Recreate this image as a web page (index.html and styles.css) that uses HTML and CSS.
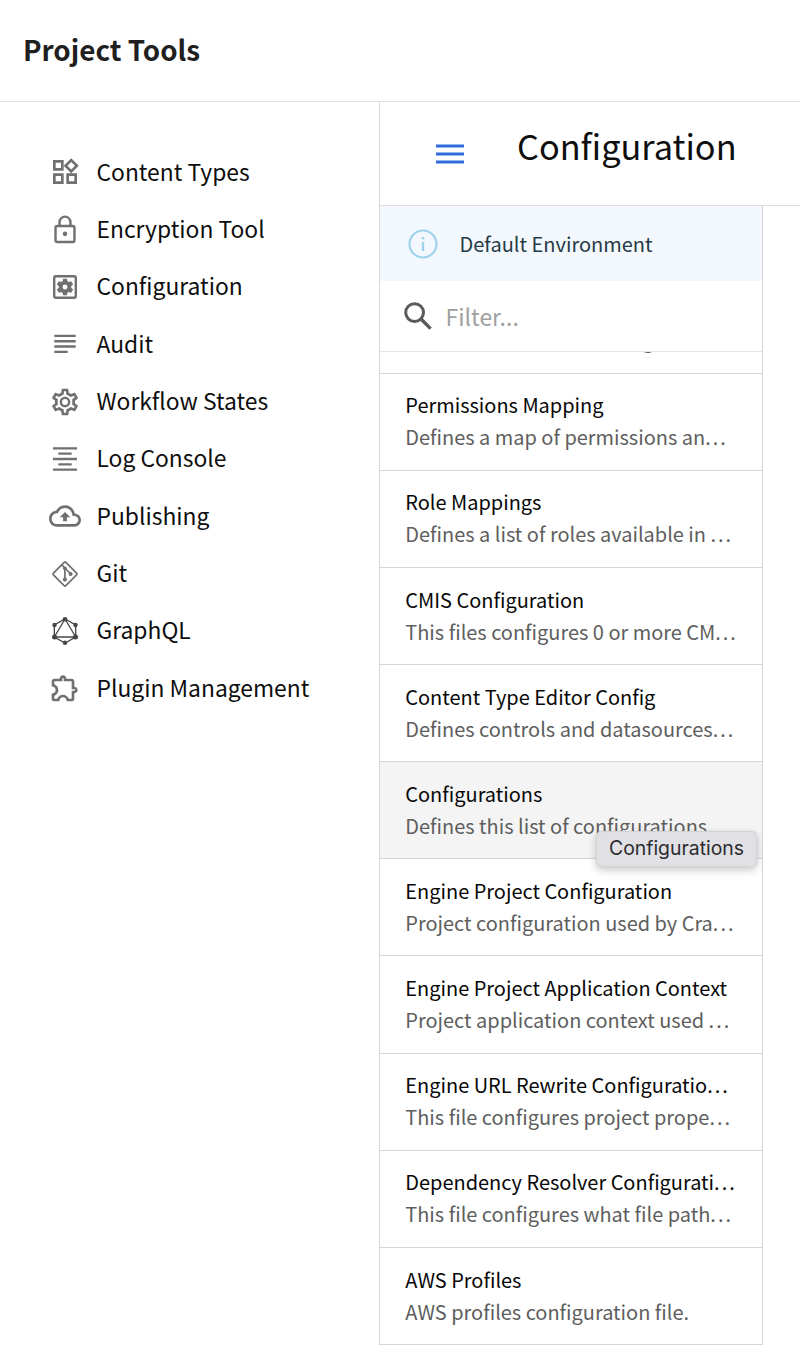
FILE: index.html
```html
<!DOCTYPE html>
<html lang="en">
<head>
<meta charset="utf-8">
<title>Project Tools</title>
<link rel="stylesheet" href="styles.css">
</head>
<body>
<div class="app">
  <header class="app-header"><h1 class="app-title">Project Tools</h1></header>
  <div class="app-body">
    <nav class="sidebar">
      <a class="nav-item"><svg class="icon" viewBox="0 0 24 24"><path d="M16.66 4.52l2.83 2.83-2.83 2.83-2.83-2.83 2.83-2.83M9 5v4H5V5h4m10 10v4h-4v-4h4M9 15v4H5v-4h4m7.66-13.31L11 7.34 16.66 13l5.66-5.66-5.66-5.65zM11 3H3v8h8V3zm10 10h-8v8h8v-8zm-10 0H3v8h8v-8z"/></svg><span class="nav-label">Content Types</span></a>
      <a class="nav-item"><svg class="icon" viewBox="0 0 24 24"><g fill="none" stroke="currentColor" stroke-width="1.8"><rect x="4.9" y="9" width="14.2" height="12" rx="1.3"/><path d="M7.9 9V6.100a4.1 4.1 0 0 1 8.2 0V9"/></g><circle cx="12" cy="14.900" r="1.700"/></svg><span class="nav-label">Encryption Tool</span></a>
      <a class="nav-item"><svg class="icon" viewBox="0 0 24 24"><rect x="3.9" y="3.9" width="16.2" height="16.2" rx="1.3" fill="none" stroke="currentColor" stroke-width="1.8"/><path transform="translate(12 12) scale(.62) translate(-12 -12)" fill-rule="evenodd" d="M19.43 12.98c.04-.32.07-.64.07-.98 0-.34-.03-.66-.07-.98l2.11-1.65c.19-.15.24-.42.12-.64l-2-3.46c-.09-.16-.26-.25-.44-.25-.06 0-.12.01-.17.03l-2.49 1c-.52-.4-1.08-.73-1.69-.98l-.38-2.65C14.46 2.18 14.25 2 14 2h-4c-.25 0-.46.18-.49.42l-.38 2.65c-.61.25-1.17.59-1.69.98l-2.49-1c-.06-.02-.12-.03-.18-.03-.17 0-.34.09-.43.25l-2 3.46c-.13.22-.07.49.12.64l2.11 1.65c-.04.32-.07.65-.07.98 0 .33.03.66.07.98l-2.11 1.65c-.19.15-.24.42-.12.64l2 3.46c.09.16.26.25.44.25.06 0 .12-.01.17-.03l2.49-1c.52.4 1.08.73 1.69.98l.38 2.65c.03.24.24.42.49.42h4c.25 0 .46-.18.49-.42l.38-2.65c.61-.25 1.17-.59 1.69-.98l2.49 1c.06.02.12.03.18.03.17 0 .34-.09.43-.25l2-3.46c.12-.22.07-.49-.12-.64l-2.11-1.65zM12 15a3 3 0 1 1 0-6 3 3 0 0 1 0 6z"/></svg><span class="nav-label">Configuration</span></a>
      <a class="nav-item"><svg class="icon" viewBox="0 0 24 24"><path d="M14 17H4v1.8h10V17zm6-8H4v1.8h16V9zM4 14.8h16V13H4v1.8zM4 5v1.8h16V5H4z"/></svg><span class="nav-label">Audit</span></a>
      <a class="nav-item"><svg class="icon" viewBox="0 0 24 24"><path fill-rule="evenodd" d="M19.43 12.98c.04-.32.07-.64.07-.98 0-.34-.03-.66-.07-.98l2.11-1.65c.19-.15.24-.42.12-.64l-2-3.46c-.09-.16-.26-.25-.44-.25-.06 0-.12.01-.17.03l-2.49 1c-.52-.4-1.08-.73-1.69-.98l-.38-2.65C14.46 2.18 14.25 2 14 2h-4c-.25 0-.46.18-.49.42l-.38 2.65c-.61.25-1.17.59-1.69.98l-2.49-1c-.06-.02-.12-.03-.18-.03-.17 0-.34.09-.43.25l-2 3.46c-.13.22-.07.49.12.64l2.11 1.65c-.04.32-.07.65-.07.98 0 .33.03.66.07.98l-2.11 1.65c-.19.15-.24.42-.12.64l2 3.46c.09.16.26.25.44.25.06 0 .12-.01.17-.03l2.49-1c.52.4 1.08.73 1.69.98l.38 2.65c.03.24.24.42.49.42h4c.25 0 .46-.18.49-.42l.38-2.65c.61-.25 1.17-.59 1.69-.98l2.49 1c.06.02.12.03.18.03.17 0 .34-.09.43-.25l2-3.46c.12-.22.07-.49-.12-.64l-2.11-1.65zm-1.98-1.71c.04.31.05.52.05.73 0 .21-.02.43-.05.73l-.14 1.13.89.7 1.08.84-.7 1.21-1.27-.51-1.04-.42-.9.68c-.43.32-.84.56-1.25.73l-1.06.43-.16 1.13-.2 1.35h-1.4l-.19-1.35-.16-1.13-1.06-.43c-.43-.18-.83-.41-1.23-.71l-.91-.7-1.06.43-1.27.51-.7-1.21 1.08-.84.89-.7-.14-1.13c-.03-.31-.05-.54-.05-.74s.02-.43.05-.73l.14-1.13-.89-.7-1.08-.84.7-1.21 1.27.51 1.04.42.9-.68c.43-.32.84-.56 1.25-.73l1.06-.43.16-1.13.2-1.35h1.39l.19 1.35.16 1.13 1.06.43c.43.18.83.41 1.23.71l.91.7 1.06-.43 1.27-.51.7 1.21-1.07.85-.89.7.14 1.13zM12 8c-2.21 0-4 1.79-4 4s1.79 4 4 4 4-1.79 4-4-1.79-4-4-4zm0 6.2a2.2 2.2 0 1 1 0-4.400 2.200 2.200 0 0 1 0 4.400z"/></svg><span class="nav-label">Workflow States</span></a>
      <a class="nav-item"><svg class="icon" viewBox="0 0 24 24"><path d="M7 15.100v1.700h10v-1.700H7zm-4 5.800h18v-1.800H3v1.800zm0-8h18v-1.800H3v1.800zm4-5.700v1.700h10V7.200H7zM3 3.100v1.800h18V3.100H3z"/></svg><span class="nav-label">Log Console</span></a>
      <a class="nav-item"><svg class="icon" viewBox="0 0 24 24"><path d="M19.35 10.04C18.67 6.59 15.64 4 12 4 9.110 4 6.600 5.640 5.350 8.040 2.340 8.360 0 10.910 0 14c0 3.310 2.690 6 6 6h13c2.760 0 5-2.240 5-5 0-2.640-2.050-4.780-4.650-4.960zM19 18H6c-2.210 0-4-1.790-4-4 0-2.050 1.530-3.760 3.560-3.970l1.070-.11.500-.95C8.080 7.140 9.940 6 12 6c2.620 0 4.880 1.860 5.390 4.430l.3 1.500 1.530.11c1.560.1 2.780 1.410 2.780 2.960 0 1.650-1.350 3-3 3zM8 13h2.550v3h2.900v-3H16l-4-4z"/></svg><span class="nav-label">Publishing</span></a>
      <a class="nav-item"><svg class="icon" viewBox="0 0 32 32"><g fill="none" stroke="currentColor" stroke-width="1.700"><rect x="7.200" y="7.200" width="17.600" height="17.600" rx="1.200" transform="rotate(45 16 16)"/><path d="M12.600 6.700L15.900 10v11.500M15.900 10l6 6"/></g><circle cx="15.900" cy="10.300" r="1.900"/><circle cx="21.600" cy="15.900" r="2"/><circle cx="15.900" cy="21.600" r="2.100"/></svg><span class="nav-label">Git</span></a>
      <a class="nav-item"><svg class="icon icon-dark" viewBox="0 0 32 32"><g fill="none" stroke="currentColor" stroke-width="1.300"><path d="M16 4l10.700 6v12L16 28 5.300 22V10z"/><path d="M16 4l10.700 18H5.300z"/></g><circle cx="16" cy="4.200" r="2.300"/><circle cx="26.500" cy="10" r="2.200"/><circle cx="26.500" cy="22" r="2.500"/><circle cx="16" cy="27.700" r="2.200"/><circle cx="5.500" cy="22" r="2.500"/><circle cx="5.500" cy="10" r="2.200"/></svg><span class="nav-label">GraphQL</span></a>
      <a class="nav-item"><svg class="icon" viewBox="0 0 24 24"><path d="M10.500 4.500c.28 0 .5.220.5.500v2h6v6h2c.28 0 .5.220.5.500s-.22.500-.5.500h-2v6h-2.120c-.68-1.750-2.390-3-4.380-3s-3.700 1.250-4.380 3H4v-2.120c1.750-.68 3-2.390 3-4.380 0-1.990-1.240-3.700-2.990-4.380L4 7h6V5c0-.28.220-.5.500-.5m0-2C9.120 2.500 8 3.620 8 5H4c-1.100 0-1.990.9-1.990 2v3.800h.29c1.490 0 2.700 1.210 2.700 2.700s-1.210 2.700-2.700 2.700H2V20c0 1.100.9 2 2 2h3.800v-.3c0-1.490 1.210-2.700 2.700-2.700s2.700 1.210 2.700 2.700v.3H17c1.100 0 2-.9 2-2v-4c1.380 0 2.500-1.120 2.500-2.500S20.380 11 19 11V7c0-1.100-.9-2-2-2h-4c0-1.380-1.120-2.500-2.500-2.500z"/></svg><span class="nav-label">Plugin Management</span></a>
    </nav>
    <main class="content">
      <div class="toolbar">
        <svg class="menu-icon" viewBox="0 0 28 20"><path d="M0 .600h28v2.800H0zM0 8.600h28v2.800H0zM0 16.600h28v2.800H0z"/></svg>
        <h2 class="page-title">Configuration</h2>
      </div>
      <section class="config-panel">
        <div class="env-alert">
          <svg class="info-icon" viewBox="0 0 30 30"><circle cx="15" cy="15" r="13.500" fill="none" stroke="currentColor" stroke-width="2.200"/><circle cx="15" cy="9.200" r="1.400"/><rect x="13.800" y="12.800" width="2.400" height="9.200"/></svg>
          <span>Default Environment</span>
        </div>
        <div class="filter">
          <svg class="search-icon" viewBox="0 0 28 28"><circle cx="10.600" cy="10.600" r="8.900" fill="none" stroke="currentColor" stroke-width="3"/><path d="M17 17l9.600 9.600" fill="none" stroke="currentColor" stroke-width="3.400"/></svg>
          <span>Filter...</span>
        </div>
        <div class="config-list">
          <div class="config-item"><div class="item-desc">Defines the toolbars configuration</div></div>
          <div class="config-item"><div class="item-name">Permissions Mapping</div><div class="item-desc">Defines a map of permissions an<span class="more">...</span></div></div>
          <div class="config-item"><div class="item-name">Role Mappings</div><div class="item-desc">Defines a list of roles available in <span class="more">...</span></div></div>
          <div class="config-item"><div class="item-name">CMIS Configuration</div><div class="item-desc">This files configures 0 or more CM<span class="more">...</span></div></div>
          <div class="config-item"><div class="item-name">Content Type Editor Config</div><div class="item-desc">Defines controls and datasources<span class="more">...</span></div></div>
          <div class="config-item is-hovered"><div class="item-name">Configurations</div><div class="item-desc">Defines this list of configurations</div><div class="tooltip">Configurations</div></div>
          <div class="config-item"><div class="item-name">Engine Project Configuration</div><div class="item-desc">Project configuration used by Cra<span class="more">...</span></div></div>
          <div class="config-item"><div class="item-name">Engine Project Application Context</div><div class="item-desc">Project application context used <span class="more">...</span></div></div>
          <div class="config-item"><div class="item-name">Engine URL Rewrite Configuratio<span class="more">...</span></div><div class="item-desc">This file configures project prope<span class="more">...</span></div></div>
          <div class="config-item"><div class="item-name">Dependency Resolver Configurati<span class="more">...</span></div><div class="item-desc">This file configures what file path<span class="more">...</span></div></div>
          <div class="config-item"><div class="item-name">AWS Profiles</div><div class="item-desc">AWS profiles configuration file.</div></div>
        </div>
      </section>
    </main>
  </div>
</div>
</body>
</html>
```
FILE: styles.css
```css
* { box-sizing: border-box; }

body {
  margin: 0;
  background: #fff;
  color: #0e0e0e;
  font-family: "Noto Sans CJK SC", "Noto Sans", sans-serif;
}

.app {
  display: flex;
  flex-direction: column;
  height: 1345px;
  overflow: hidden;
}

.app-header {
  display: flex;
  align-items: center;
  flex: none;
  height: 102px;
  padding: 0 24px 3px 23px;
  border-bottom: 1px solid #e1e1e1;
}

.app-title {
  margin: 0;
  font-size: 27.8px;
  font-weight: 700;
  line-height: 40px;
  color: #1f1f1f;
}

.app-body {
  display: flex;
  flex: 1;
  min-height: 0;
}

.sidebar {
  flex: none;
  width: 380px;
  padding: 41.6px 0 0 48.5px;
  border-right: 1px solid #d8d8d8;
}

.nav-item {
  display: flex;
  align-items: center;
  gap: 16px;
  height: 57.33px;
}

.nav-label {
  padding-bottom: 3px;
  font-size: 22.85px;
  line-height: 34px;
  white-space: nowrap;
}

.icon {
  flex: none;
  width: 32px;
  height: 32px;
  color: #707070;
  fill: currentColor;
}

.icon-dark { color: #464646; }

.content {
  display: flex;
  flex-direction: column;
  flex: 1;
  min-width: 0;
}

.toolbar {
  display: flex;
  align-items: center;
  flex: none;
  gap: 53px;
  height: 104px;
  padding-left: 56px;
  border-bottom: 1px solid #dcdcdc;
}

.menu-icon {
  width: 28px;
  height: 20px;
  fill: #2f6cdb;
}

.page-title {
  margin: 0;
  padding-bottom: 18px;
  font-size: 34.3px;
  font-weight: 400;
  line-height: 48px;
}

.config-panel {
  display: flex;
  flex-direction: column;
  flex: 1;
  min-height: 0;
  width: 383px;
  border-right: 1px solid #d6d6d6;
}

.env-alert {
  display: flex;
  align-items: center;
  flex: none;
  gap: 21.5px;
  height: 75px;
  padding-left: 28px;
  background: #f2f8fd;
  color: #263a46;
  font-size: 20px;
}

.info-icon {
  width: 30px;
  height: 30px;
  color: #9fd3ec;
  fill: currentColor;
}

.filter {
  display: flex;
  align-items: center;
  flex: none;
  gap: 13.5px;
  height: 71px;
  padding-left: 24px;
  border-bottom: 1px solid #e4e4e4;
  color: #a0a0a0;
  font-size: 23px;
}

.search-icon {
  width: 28px;
  height: 28px;
  color: #5a5a5a;
}

.config-list {
  display: flex;
  flex-direction: column;
  justify-content: flex-end;
  flex: 1;
  min-height: 0;
  overflow: hidden;
}

.config-item {
  position: relative;
  display: flex;
  flex-direction: column;
  justify-content: flex-end;
  flex: none;
  height: 97.15px;
  padding: 0 0 16.5px 25.3px;
  border-bottom: 1px solid #d6d6d6;
  font-size: 19.97px;
  line-height: 32px;
  white-space: nowrap;
}

.is-hovered {
  z-index: 1;
  background: #f4f4f4;
}

.item-name { color: #080808; }

.item-desc { color: #5e5e5e; }

.more { letter-spacing: 2px; }

.tooltip {
  position: absolute;
  top: 68.5px;
  right: 5px;
  width: 161px;
  height: 36px;
  border: 1px solid #d2d2d5;
  border-radius: 5px;
  background: #e1e1e5;
  box-shadow: 0 3px 9px rgba(0, 0, 0, .22);
  color: #2b2b30;
  font-family: Inter, sans-serif;
  font-size: 19.4px;
  line-height: 33px;
  text-align: center;
}
```
